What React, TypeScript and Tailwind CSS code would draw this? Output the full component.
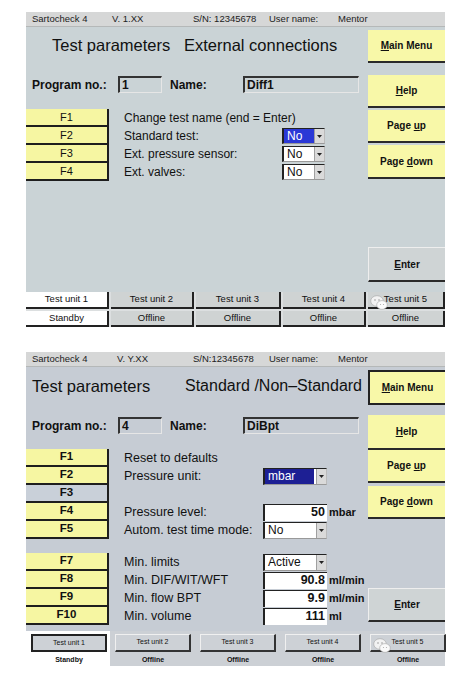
import React from "react";

const ff = "font-['Liberation_Sans',Arial,sans-serif]";

function TitleBar({ version, sn, wide }: { version: string; sn: string; wide?: boolean }) {
  return (
    <div className="h-[15px] shrink-0 bg-[#d6d7d7] border-b border-[#b5b8b8] flex items-center pl-[6px] text-[9.5px] text-[#222]">
      <span className={wide ? "w-[85px]" : "w-[80px]"}>Sartocheck 4</span>
      <span className={wide ? "w-[76px]" : "w-[81px]"}>{version}</span>
      <span className="w-[76px]">{sn}</span>
      <span className="w-[69px]">User name:</span>
      <span>Mentor</span>
    </div>
  );
}

function Arrow() {
  return (
    <div className="w-[10px] h-full bg-[#dadada] border-l border-[#a0a0a0] flex items-center justify-center">
      <svg width="5" height="3" viewBox="0 0 5 3">
        <path d="M0 0h5L2.5 3z" fill="#222" />
      </svg>
    </div>
  );
}

function Select({ value, active, big }: { value: string; active?: string; big?: boolean }) {
  return (
    <div
      className={`flex bg-white border-l-2 border-t border-[#222] border-b border-r border-b-[#999] border-r-[#bbb] ${
        big ? "w-[64px] h-[17px] text-[12px]" : "w-[43px] h-[16px] text-[12px]"
      }`}
    >
      <div
        className={`flex-1 flex items-center pl-[3px] ${
          active === "bright" ? "bg-[#2a38d6] text-white" : active === "dark" ? "bg-[#1d1f94] text-white mr-[2px]" : "text-[#111]"
        }`}
      >
        {value}
      </div>
      <Arrow />
    </div>
  );
}

function Value({ value, unit }: { value: string; unit: string }) {
  return (
    <div className="flex items-center">
      <div className="w-[64px] h-[17px] bg-white border-l-2 border-t border-[#222] flex items-center justify-end pr-[2px] font-bold text-[12.5px]">
        {value}
      </div>
      <span className="ml-[2px] font-bold text-[11px]">{unit}</span>
    </div>
  );
}

function FKey({ f, gray, bold }: { f: string; gray?: boolean; bold?: boolean }) {
  return (
    <div
      className={`w-[83px] h-[18px] shrink-0 border-r-2 border-b-2 border-[#1e1e1e] flex items-center justify-center ${
        gray ? "bg-[#c9d0d9]" : "bg-[#f6f6a2]"
      } ${bold ? "text-[11.5px] font-bold" : "text-[11px]"}`}
    >
      {f}
    </div>
  );
}

function Row({ f, label, control, gray, second }: { f?: string; label?: string; control?: React.ReactNode; gray?: boolean; second?: boolean }) {
  return (
    <div className="flex items-center h-[18px]">
      {f ? <FKey f={f} gray={gray} bold={second} /> : <div className="w-[83px]" />}
      <span className={`ml-[15px] whitespace-nowrap ${second ? "w-[139px] text-[12.5px]" : "w-[158px] text-[12px]"}`}>{label}</span>
      {control}
    </div>
  );
}

function ProgramRow({ no, name, top }: { no: string; name: string; top: string }) {
  const box = "h-[17px] border-l-2 border-t-2 border-[#333] border-r border-b border-r-[#e6e6e6] border-b-[#e6e6e6] flex items-center pl-[2px]";
  return (
    <div className={`flex items-center h-[17px] font-bold text-[12px] ${top}`}>
      <span className="ml-[6px] w-[86px]">Program no.:</span>
      <div className={`w-[44px] ${box}`}>{no}</div>
      <span className="ml-[8px] w-[73px]">Name:</span>
      <div className={`w-[116px] ${box}`}>{name}</div>
    </div>
  );
}

function YButton({ children, cls }: { children: React.ReactNode; cls: string }) {
  return (
    <div className={`bg-[#f8f8a8] border-b-2 border-[#2a2a2a] flex items-center justify-center font-bold text-[10px] ${cls}`}>
      {children}
    </div>
  );
}

function EnterButton({ cls }: { cls: string }) {
  return (
    <div className={`bg-[#cfd4d5] border-t border-l border-[#eeeeee] border-b-2 border-b-[#2a2a2a] flex items-center justify-center font-bold text-[10px] ${cls}`}>
      <span>
        <u>E</u>nter
      </span>
    </div>
  );
}

function WeChat() {
  return (
    <svg className="absolute left-[2px] top-[3px]" width="18" height="15" viewBox="0 0 18 15">
      <ellipse cx="7" cy="6" rx="6.3" ry="5.3" fill="#f2f2f2" stroke="#a5a5a5" strokeWidth="0.6" />
      <ellipse cx="12" cy="10" rx="5.3" ry="4.4" fill="#fafafa" stroke="#a5a5a5" strokeWidth="0.6" />
      <circle cx="5" cy="5" r="0.8" fill="#999" />
      <circle cx="9" cy="5" r="0.8" fill="#999" />
      <circle cx="10.5" cy="9.5" r="0.6" fill="#aaa" />
      <circle cx="13.5" cy="9.5" r="0.6" fill="#aaa" />
    </svg>
  );
}

const units = ["Test unit 1", "Test unit 2", "Test unit 3", "Test unit 4", "Test unit 5"];
const topWidths = ["w-[83px]", "w-[83px]", "w-[85px]", "w-[83px]", "w-[77px]"];

function ScreenOne() {
  return (
    <div className="w-[419px] bg-[#cad3d6] flex flex-col">
      <TitleBar version="V. 1.XX" sn="S/N: 12345678" />
      <div className="flex h-[265px]">
        <div className="w-[342px] flex flex-col">
          <div className="mt-[8px] h-[20px] flex items-center text-[16.5px] whitespace-nowrap">
            <span className="ml-[26px] w-[132px]">Test parameters</span>
            <span>External connections</span>
          </div>
          <ProgramRow no="1" name="Diff1" top="mt-[21px]" />
          <div className="mt-[16px] flex flex-col">
            <Row f="F1" label="Change test name (end = Enter)" />
            <Row f="F2" label="Standard test:" control={<Select value="No" active="bright" />} />
            <Row f="F3" label="Ext. pressure sensor:" control={<Select value="No" />} />
            <Row f="F4" label="Ext. valves:" control={<Select value="No" />} />
          </div>
        </div>
        <div className="w-[77px] flex flex-col">
          <YButton cls="mt-[3px] h-[33px]">
            <span>
              <u>M</u>ain Menu
            </span>
          </YButton>
          <YButton cls="mt-[12px] h-[33px]">
            <span>
              <u>H</u>elp
            </span>
          </YButton>
          <YButton cls="mt-[2px] h-[33px]">
            <span>
              Page <u>u</u>p
            </span>
          </YButton>
          <YButton cls="mt-[2px] h-[34px]">
            <span>
              Page <u>d</u>own
            </span>
          </YButton>
          <EnterButton cls="mt-[68px] h-[35px]" />
        </div>
      </div>
      <div className="flex gap-x-[2px] bg-[#dcdfe0] text-[9.5px]">
        {units.map((u, i) => (
          <div key={u} className={`${topWidths[i]} flex flex-col gap-y-[2px]`}>
            <div
              className={`relative h-[17px] border-r-2 border-b-2 border-[#222] flex items-center justify-center ${
                i === 0 ? "bg-white" : "bg-[#cfd3d3]"
              }`}
            >
              {i === 4 && <WeChat />}
              {u}
            </div>
            <div
              className={`h-[16px] border-r-2 border-b-2 border-[#222] flex items-center justify-center ${
                i === 0 ? "bg-white" : "bg-[#cfd3d3]"
              }`}
            >
              {i === 0 ? "Standby" : "Offline"}
            </div>
          </div>
        ))}
      </div>
    </div>
  );
}

function ScreenTwo() {
  return (
    <div className="w-[419px] bg-[#c6ccd4] flex flex-col">
      <TitleBar version="V. Y.XX" sn="S/N:12345678" wide />
      <div className="flex h-[264px]">
        <div className="w-[342px] flex flex-col">
          <div className="mt-[9px] h-[20px] flex items-center text-[16.5px] whitespace-nowrap">
            <span className="ml-[6px] w-[153px]">Test parameters</span>
            <span className="text-[16px]">Standard /Non–Standard</span>
          </div>
          <ProgramRow no="4" name="DiBpt" top="mt-[21px]" />
          <div className="mt-[15px] flex flex-col">
            <Row second f="F1" label="Reset to defaults" />
            <Row second f="F2" label="Pressure unit:" control={<Select big value="mbar" active="dark" />} />
            <Row second f="F3" gray />
            <Row second f="F4" label="Pressure level:" control={<Value value="50" unit="mbar" />} />
            <Row second f="F5" label="Autom. test time mode:" control={<Select big value="No" />} />
            <div className="h-[14px]" />
            <Row second f="F7" label="Min. limits" control={<Select big value="Active" />} />
            <Row second f="F8" label="Min. DIF/WIT/WFT" control={<Value value="90.8" unit="ml/min" />} />
            <Row second f="F9" label="Min. flow BPT" control={<Value value="9.9" unit="ml/min" />} />
            <Row second f="F10" label="Min. volume" control={<Value value="111" unit="ml" />} />
          </div>
        </div>
        <div className="w-[77px] flex flex-col">
          <YButton cls="mt-[3px] h-[35px] border-2 border-r-0 border-[#222]">
            <span>
              <u>M</u>ain Menu
            </span>
          </YButton>
          <YButton cls="mt-[10px] h-[35px]">
            <span>
              <u>H</u>elp
            </span>
          </YButton>
          <YButton cls="h-[33px]">
            <span>
              Page <u>u</u>p
            </span>
          </YButton>
          <YButton cls="mt-[3px] h-[33px]">
            <span>
              Page <u>d</u>own
            </span>
          </YButton>
          <EnterButton cls="mt-[69px] h-[34px] bg-[#c9cfd6]" />
        </div>
      </div>
      <div className="flex h-[35px] bg-[#ccd0d5]">
        {units.map((u, i) => (
          <div key={u} className={`flex flex-col pl-[5px] pt-[3px] ${i === 0 ? "w-[84px] bg-white" : i === 4 ? "w-[80px]" : "w-[85px]"}`}>
            <div
              className={`relative w-[76px] h-[18px] bg-[#cdd1d6] flex items-center justify-center text-[7px] ${
                i === 0 ? "border-2 border-[#222]" : "border-t border-l border-[#f0f0f0] border-r-2 border-b-2 border-r-[#333] border-b-[#333]"
              }`}
            >
              {i === 4 && <WeChat />}
              {u}
            </div>
            <div className="w-[76px] mt-[3px] text-center text-[7px] font-bold">{i === 0 ? "Standby" : "Offline"}</div>
          </div>
        ))}
      </div>
    </div>
  );
}

export default function App() {
  return (
    <div className={`w-[465px] h-[684px] bg-white pt-[12px] pl-[26px] text-[#111] ${ff}`}>
      <ScreenOne />
      <div className="h-[25px]" />
      <ScreenTwo />
    </div>
  );
}
